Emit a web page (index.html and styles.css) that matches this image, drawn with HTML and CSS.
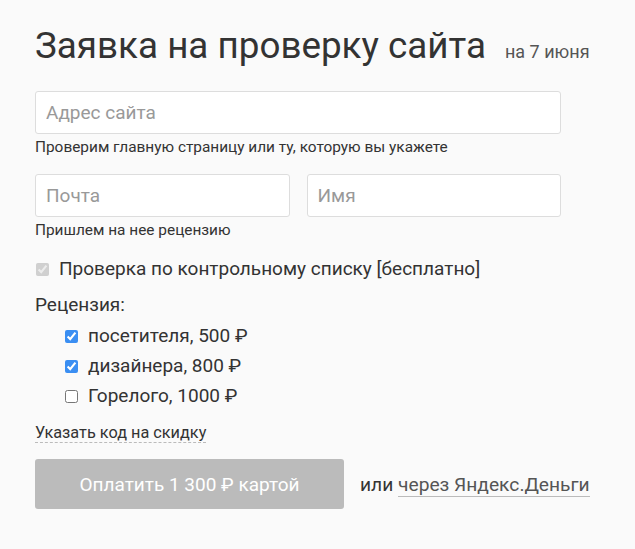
FILE: index.html
```html
<!DOCTYPE html>
<html lang="ru">
<head>
<meta charset="utf-8">
<link rel="stylesheet" href="styles.css">
</head>
<body>
<form class="order">
  <header class="head">
    <h1 class="title">Заявка на проверку сайта</h1>
    <span class="date">на 7 июня</span>
  </header>

  <div class="field">
    <input class="input" type="text" placeholder="Адрес сайта">
    <p class="hint">Проверим главную страницу или ту, которую вы укажете</p>
  </div>

  <div class="field">
    <div class="pair">
      <input class="input" type="text" placeholder="Почта">
      <input class="input" type="text" placeholder="Имя">
    </div>
    <p class="hint">Пришлем на нее рецензию</p>
  </div>

  <label class="check main-check"><input type="checkbox" checked disabled><span>Проверка по контрольному списку [бесплатно]</span></label>

  <div class="review">
    <div class="review-title">Рецензия:</div>
    <label class="check sub"><input type="checkbox" checked><span>посетителя, 500 ₽</span></label>
    <label class="check sub"><input type="checkbox" checked><span>дизайнера, 800 ₽</span></label>
    <label class="check sub"><input type="checkbox"><span>Горелого, 1000 ₽</span></label>
  </div>

  <div class="promo"><span class="dashed">Указать код на скидку</span></div>

  <div class="pay">
    <button type="button" class="btn">Оплатить 1 300 ₽ картой</button>
    <span class="alt">или <a class="link" href="#">через Яндекс.Деньги</a></span>
  </div>
</form>
</body>
</html>
```

FILE: styles.css
```css
html, body {
  margin: 0;
  padding: 0;
  background: #fafafa;
}
body {
  font-family: Roboto, "Noto Sans", sans-serif;
  color: #333;
}
.order {
  width: 580px;
  padding: 22px 0 0 35px;
}
.head {
  display: flex;
  align-items: baseline;
  gap: 19px;
  margin-bottom: 21px;
  white-space: nowrap;
}
.title {
  margin: 0;
  font-weight: 400;
  font-size: 36.8px;
  line-height: 48px;
  color: #333;
}
.date {
  font-size: 18px;
  color: #555;
}
.field {
  width: 526px;
  margin-bottom: 19px;
}
.pair {
  display: flex;
  gap: 17px;
}
.input {
  display: block;
  box-sizing: border-box;
  width: 100%;
  height: 43px;
  margin: 0;
  padding: 0 10px;
  border: 1px solid #ddd;
  border-radius: 3px;
  background: #fff;
  font-family: Roboto, sans-serif;
  font-size: 19px;
  color: #333;
  outline: none;
}
.input::placeholder {
  color: #999;
}
.hint {
  margin: 5px 0 0;
  font-size: 15.4px;
  line-height: 16px;
  color: #333;
}
.check {
  display: flex;
  align-items: center;
  font-size: 19px;
  line-height: 24px;
  color: #333;
}
.check input {
  width: 13px;
  height: 13px;
  margin: 0 10px 0 1px;
  flex-shrink: 0;
  accent-color: #3a8ef2;
}
.main-check {
  margin-top: 0;
  margin-bottom: 12px;
}
.review-title {
  font-size: 19px;
  line-height: 24px;
  margin-bottom: 4px;
}
.sub {
  padding-left: 29px;
  height: 30px;
}
.promo {
  margin-top: 12px;
  font-size: 16.3px;
  line-height: 20px;
}
.dashed {
  border-bottom: 1px dashed #bbb;
}
.pay {
  display: flex;
  align-items: center;
  margin-top: 16px;
  white-space: nowrap;
}
.btn {
  flex-shrink: 0;
  width: 309px;
  height: 50px;
  border: 0;
  border-radius: 3px;
  background: #bbb;
  color: #fff;
  font-family: Roboto, sans-serif;
  font-size: 19px;
  padding: 0;
}
.alt {
  margin-left: 16px;
  font-size: 19.2px;
  color: #333;
}
.link {
  color: #555;
  text-decoration: none;
  border-bottom: 1px solid #bbb;
}
```
